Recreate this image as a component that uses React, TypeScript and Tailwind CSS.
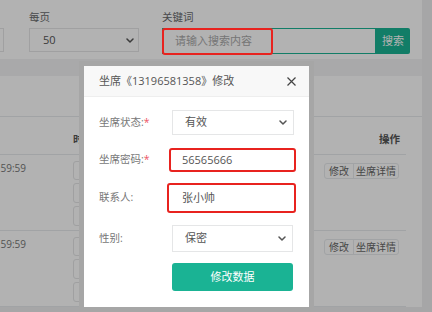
import React from "react";

const Chevron: React.FC<{ className?: string }> = ({ className }) => (
  <svg width="8" height="5" viewBox="0 0 8 5" fill="none" className={className}>
    <path d="M1 1l3 3 3-3" stroke="currentColor" strokeWidth="1.5" strokeLinecap="round" strokeLinejoin="round" />
  </svg>
);

const rows = [{ time: "59:59" }, { time: "59:59" }];

const RowBoxes: React.FC = () => (
  <div className="ml-[47px] flex w-[60px] flex-col gap-[3px]">
    <div className="h-[19px] rounded-[3px] border border-[#e5e6e7] bg-white" />
    <div className="h-[20px] rounded-[3px] border border-[#e5e6e7] bg-white" />
    <div className="h-[20px] rounded-[3px] border border-[#e5e6e7] bg-white" />
  </div>
);

export default function App() {
  return (
    <div className="relative h-[312px] w-[432px] overflow-hidden bg-[#eeeeef] font-['Open_Sans','Noto_Sans_CJK_SC',sans-serif]">
      <div className="flex h-[307px] w-[422px] flex-col bg-white">
        {/* Filters */}
        <div className="flex h-[63px] items-start pt-[12px]">
          <div className="-ml-[26px] flex w-[30px] flex-col">
            <div className="h-[10px]" />
            <div className="relative mt-[6px] flex h-[24px] items-center border border-[#e5e6e7] bg-white">
              <Chevron className="absolute right-[3px] text-[#555]" />
            </div>
          </div>
          <div className="ml-[25px] flex w-[110px] flex-col">
            <div className="h-[10px] text-[10.5px] leading-[10px] text-[#676a6c]">每页</div>
            <div className="relative mt-[6px] flex h-[24px] items-center border border-[#e5e6e7] bg-white pl-[13px] text-[11px] text-[#555]">
              50
              <Chevron className="absolute right-[4px] text-[#555]" />
            </div>
          </div>
          <div className="ml-[23px] flex flex-col">
            <div className="h-[10px] text-[10.5px] leading-[10px] text-[#676a6c]">关键词</div>
            <div className="relative mt-[6px] flex h-[26px]">
              <div className="flex w-[214px] items-center border border-[#1ab394] bg-white pl-[12px] text-[11px] text-[#aaa]">
                请输入搜索内容
              </div>
              <div className="flex w-[34px] items-center justify-center rounded-r-[2px] bg-[#1ab394] text-[11px] text-white">
                搜索
              </div>
              <div className="absolute left-0 top-0 z-30 h-[27px] w-[111px] rounded-[3px] border-2 border-[#e8231f]" />
            </div>
          </div>
        </div>

        {/* Toolbar band */}
        <div className="h-[19px] bg-[#f3f3f4]" />
        <div className="h-[44px] border-b border-[#e7eaec]" />

        {/* Table */}
        <div className="mr-[16px] flex flex-col">
          <div className="flex h-[38px] items-end border-b border-[#e7eaec] pb-[8px] text-[10.5px] font-bold text-[#555]">
            <div className="w-[26px]" />
            <div className="ml-[47px] w-[60px] leading-[14px]">时间</div>
            <div className="flex-1" />
            <div className="w-[92px] pr-[6px] text-right leading-[14px]">操作</div>
          </div>
          {rows.map((r, i) => (
            <div key={i} className="flex h-[76px] border-b border-[#e7eaec] pt-[6px]">
              <div className="flex w-[26px] justify-end whitespace-nowrap text-[10px] leading-[14px] text-[#777]">
                {r.time}
              </div>
              <RowBoxes />
              <div className="flex-1" />
              <div className="w-[92px] pl-[10px] pt-[2px]">
                <div className="flex h-[16px] w-[75px] overflow-hidden rounded-[3px] border border-[#e7eaec] bg-white text-[10px] leading-[14px] text-[#666]">
                  <div className="flex w-[29px] items-center justify-center border-r border-[#e7eaec]">修改</div>
                  <div className="flex flex-1 items-center justify-center">坐席详情</div>
                </div>
              </div>
            </div>
          ))}
        </div>
      </div>

      {/* Overlay */}
      <div className="absolute inset-0 z-10 bg-black/30" />

      {/* Modal */}
      <div className="absolute left-[79px] top-[61px] z-20 w-[235px] border-[5px] border-[#a6a6a6] bg-white">
        <div className="flex h-[31px] items-center justify-between border-b border-[#eee] bg-[#f8f8f8] pl-[15px] pr-[13px]">
          <span className="text-[11px] text-[#555]">坐席《13196581358》修改</span>
          <svg width="9" height="9" viewBox="0 0 9 9" fill="none">
            <path d="M0.5 0.5l8 8M8.5 0.5l-8 8" stroke="#444" strokeWidth="1.2" />
          </svg>
        </div>
        <div className="flex flex-col px-[15px] pb-[16px] pt-[13px] text-[10.5px]">
          <div className="flex h-[25px] items-center">
            <div className="w-[73px] text-[#777]">
              坐席状态:<span className="text-[#ed5565]">*</span>
            </div>
            <div className="relative flex h-full flex-1 items-center border border-[#e5e6e7] pl-[12px] text-[11px] text-[#555]">
              有效
              <Chevron className="absolute right-[6px] text-[#555]" />
            </div>
          </div>
          <div className="mt-[13px] flex h-[24px] items-center">
            <div className="w-[73px] text-[#777]">
              坐席密码:<span className="text-[#ed5565]">*</span>
            </div>
            <div className="-ml-[3px] -mr-[2px] flex h-full flex-1 items-center rounded-[3px] border-2 border-[#e8231f] pl-[11px] text-[11px] text-[#555]">
              56565666
            </div>
          </div>
          <div className="mt-[11px] flex h-[30px] items-center">
            <div className="w-[73px] text-[#777]">联系人:</div>
            <div className="-ml-[5px] -mr-[2px] flex h-full flex-1 items-center rounded-[3px] border-2 border-[#e8231f] pl-[13px] text-[11px] text-[#555]">
              张小帅
            </div>
          </div>
          <div className="mt-[12px] flex h-[27px] items-center">
            <div className="w-[73px] text-[#777]">性别:</div>
            <div className="relative mr-[1px] flex h-full flex-1 items-center border border-[#e5e6e7] pl-[12px] text-[11px] text-[#555]">
              保密
              <Chevron className="absolute right-[6px] text-[#555]" />
            </div>
          </div>
          <div className="ml-[73px] mr-[1px] mt-[11px] flex h-[28px] items-center justify-center rounded-[3px] bg-[#1ab394] text-[11px] text-white">
            修改数据
          </div>
        </div>
      </div>
    </div>
  );
}
